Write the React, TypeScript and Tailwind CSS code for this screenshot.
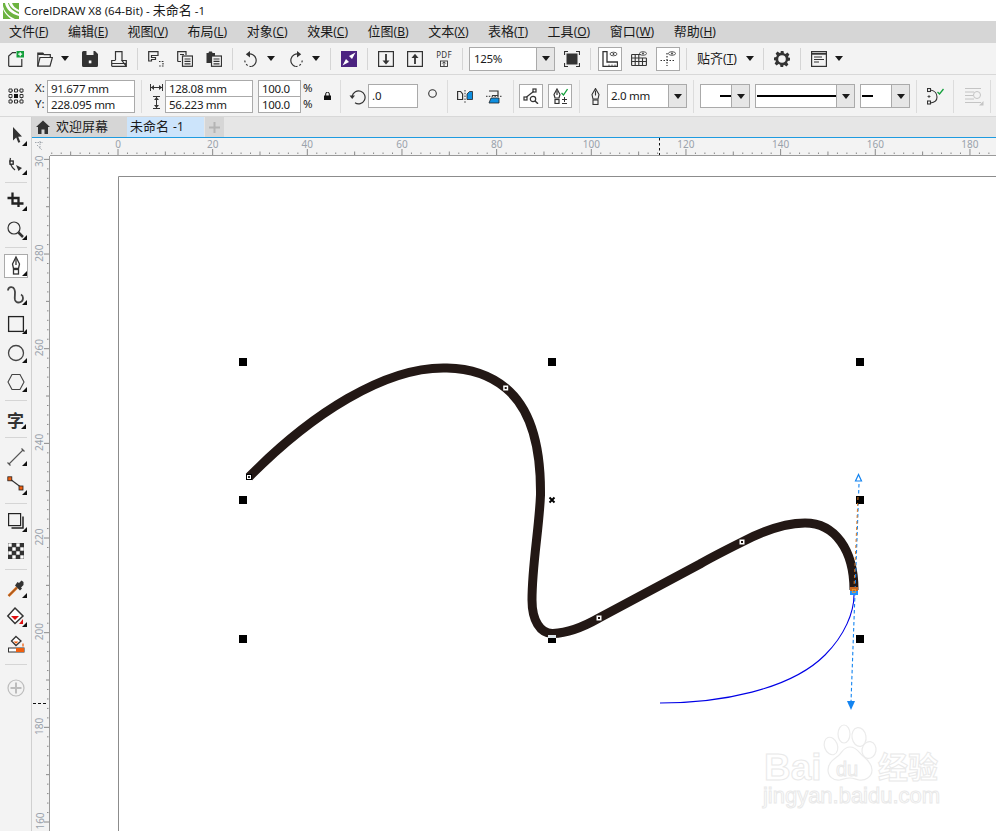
import React from "react";

const D = "#333333";

function Tri({ className = "" }: { className?: string }) {
  return (
    <svg viewBox="0 0 8 5" className={`w-[8px] h-[5px] ${className}`}>
      <polygon points="0,0 8,0 4,5" fill="#1a1a1a" />
    </svg>
  );
}

function Sep({ className = "" }: { className?: string }) {
  return <div className={`w-px h-[22px] bg-[#d5d5d5] ${className}`} />;
}
function Sep2({ className = "" }: { className?: string }) {
  return <div className={`w-px h-[33px] bg-[#dcdcdc] ${className}`} />;
}

function Ico({ children, className = "", vb = "0 0 16 16" }: { children: React.ReactNode; className?: string; vb?: string }) {
  return (
    <svg viewBox={vb} fill="none" stroke={D} strokeWidth="1.2" className={`block shrink-0 w-[16px] h-[16px] ${className}`}>
      {children}
    </svg>
  );
}

function MenuItem({ zh, k }: { zh: string; k: string }) {
  return (
    <span className="whitespace-nowrap text-[13px]">
      {zh}
      <span className="text-[12px]">
        (<span className="underline">{k}</span>)
      </span>
    </span>
  );
}

function Combo({ className = "", btn = "w-[18px]", children }: { className?: string; btn?: string; children?: React.ReactNode }) {
  return (
    <div className={`flex h-[24px] border border-[#aaaaaa] bg-white ${className}`}>
      <div className="flex-1 flex items-center min-w-0">{children}</div>
      <div className={`${btn} shrink-0 bg-[#e6e6e6] border-l border-[#aaaaaa] flex items-center justify-center`}>
        <Tri />
      </div>
    </div>
  );
}

function BoxBtn({ children, className = "" }: { children: React.ReactNode; className?: string }) {
  return <div className={`w-[24px] h-[24px] border border-[#aaaaaa] bg-white flex items-center justify-center ${className}`}>{children}</div>;
}

function Field({ v, className = "" }: { v: string; className?: string }) {
  return <div className={`h-[17px] border border-[#aaaaaa] bg-white pl-[3px] leading-[15px] text-[11.5px] tracking-[-0.3px] text-[#1a1a1a] whitespace-nowrap ${className}`}>{v}</div>;
}

function Tool({ children, flyout = true, active = false }: { children: React.ReactNode; flyout?: boolean; active?: boolean }) {
  return (
    <div className="h-[29px] flex items-center justify-center">
      <div className={`relative w-[24px] h-[24px] ${active ? "border border-[#aaaaaa] bg-white" : ""}`}>
        <svg viewBox="0 0 24 24" fill="none" stroke={D} strokeWidth="1.3" className={`block w-[24px] h-[24px] ${active ? "-m-px" : ""}`}>
          {children}
          {flyout && <polygon points="23,17 23,22 18,22" fill="#111" stroke="none" />}
        </svg>
      </div>
    </div>
  );
}

function ToolSep({ className }: { className: string }) {
  return (
    <div className={`${className} flex items-center justify-center`}>
      <div className="w-[22px] h-px bg-[#d5d5d5]" />
    </div>
  );
}

const TOP = [0, 20, 40, 60, 80, 100, 120, 140, 160, 180];
const LEFT = [300, 280, 260, 240, 220, 200, 180, 160];
const topX = (v: number) => 118 + v * 4.733;
const leftY = (v: number) => 822 - (v - 160) * 4.733;
const seq = (a: number, b: number) => Array.from({ length: b - a + 1 }, (_, i) => a + i);

function RulerTop() {
  return (
    <svg viewBox="50 138 946 17" className="block w-[946px] h-[17px]">
      {seq(-14, 190)
        .filter((u) => u % 2 === 0)
        .map((u) => {
          const x = topX(u);
          if (u % 20 === 0) return <line key={u} x1={x} x2={x} y1="149" y2="155" stroke="#8a8a8a" strokeWidth="1" />;
          if (u % 10 === 0) return <line key={u} x1={x} x2={x} y1="151.5" y2="155" stroke="#8a8a8a" strokeWidth="1" />;
          return <rect key={u} x={x - 0.5} y="152.5" width="1" height="1.5" fill="#8a8a8a" />;
        })}
      {TOP.map((v) => (
        <text key={v} x={topX(v)} y="148" textAnchor="middle" fontSize="10" fill="#9aa2ab" fontFamily="'Noto Sans',sans-serif">
          {v}
        </text>
      ))}
      <line x1="659.5" x2="659.5" y1="138" y2="155" stroke="#111" strokeWidth="1" strokeDasharray="2.5 2.5" />
    </svg>
  );
}

function RulerLeft() {
  return (
    <svg viewBox="32 156 17 675" className="block w-[17px] h-[675px]">
      {seq(150, 304)
        .filter((u) => u % 2 === 0)
        .map((u) => {
          const y = leftY(u);
          if (u % 20 === 0) return <line key={u} x1="44" x2="49" y1={y} y2={y} stroke="#8a8a8a" strokeWidth="1" />;
          if (u % 10 === 0) return <line key={u} x1="46" x2="49" y1={y} y2={y} stroke="#8a8a8a" strokeWidth="1" />;
          return <rect key={u} x="47" y={y - 0.5} width="1.5" height="1" fill="#8a8a8a" />;
        })}
      {LEFT.map((v) => (
        <text key={v} x="43.5" y={leftY(v) - 1} textAnchor="middle" fontSize="10" fill="#9aa2ab" fontFamily="'Noto Sans',sans-serif" transform={`rotate(-90 43.5 ${leftY(v) - 1})`}>
          {v}
        </text>
      ))}
      <line x1="33" x2="48" y1="703.5" y2="703.5" stroke="#111" strokeWidth="1" strokeDasharray="3 2" />
    </svg>
  );
}

function Node({ x, y }: { x: number; y: number }) {
  return (
    <g>
      <rect x={x - 2.5} y={y - 2.5} width="5" height="5" fill="#fff" />
      <rect x={x - 1} y={y - 1} width="2" height="2" fill="#231815" />
    </g>
  );
}

function Canvas() {
  const handles = [
    [243, 362],
    [552, 362],
    [860, 362],
    [243, 500],
    [860, 500],
    [243, 639],
    [552, 639],
    [860, 639],
  ];
  return (
    <svg viewBox="50 156 946 675" className="block w-[946px] h-[675px]">
      <path d="M118.5 831V176.5H996" fill="none" stroke="#8c8c8c" strokeWidth="1" />
      {/* watermark */}
      <g stroke="#ebebeb" strokeWidth="1.2" fill="#fff">
        <ellipse cx="831" cy="746" rx="6.5" ry="9" transform="rotate(-20 831 746)" />
        <ellipse cx="844" cy="734" rx="6" ry="9" />
        <ellipse cx="859" cy="737" rx="7" ry="9.5" transform="rotate(-10 859 737)" />
        <ellipse cx="869" cy="750" rx="7" ry="8.5" transform="rotate(10 869 750)" />
        <path d="M850 747c7 0 9 6 13 9 5 4 9 8 9 14 0 7-7 11-13 10-4-1-6-2-9-2s-6 1-10 2c-7 1-12-4-12-10 0-7 5-10 10-14 4-3 5-9 12-9z" />
      </g>
      <g fill="#fff" stroke="#e9e9e9" strokeWidth="1" fontFamily="'Liberation Sans',sans-serif" fontWeight="700">
        <text x="764" y="780" fontSize="37">Bai</text>
        <text x="836" y="776" fontSize="20" fontWeight="400">du</text>
        <text x="878" y="778" fontSize="30" fontFamily="'Noto Sans CJK SC',sans-serif">经验</text>
        <text x="763" y="803" fontSize="22" fontWeight="400" textLength="177">jingyan.baidu.com</text>
      </g>
      {/* blue preview */}
      <path d="M660 703C720 703 790 690 825 655C845 635 854 612 854 595" fill="none" stroke="#0000e6" strokeWidth="1.1" />
      {/* main curve */}
      <path
        d="M249 477C310 415 385 366 447 368C470 368.5 490 375 505.7 388C530 408 541 445 540.5 495C539 530 532 565 532 600C532 620 540 634 553 633.5C570 633 585 626 599 618L700 564C712 557 726 550 742 542C765 530 785 523 805 523C835 523 854 550 854 590"
        fill="none"
        stroke="#231815"
        strokeWidth="9"
      />
      <line x1="859" y1="484" x2="851" y2="702" stroke="#1484f0" strokeWidth="1.1" strokeDasharray="3.5 2.5" />
      <polygon points="858.5,474.5 855.5,481 861.5,481" fill="#fff" stroke="#1484f0" strokeWidth="1.2" />
      <polygon points="847,701 855,701 851,710" fill="#1484f0" />
      {handles.map(([x, y]) => (
        <rect key={`${x}-${y}`} x={x - 4} y={y - 4} width="8" height="8" fill="#000" />
      ))}
      <line x1="858" y1="497" x2="854" y2="588" stroke="#e07a20" strokeWidth="1" strokeDasharray="3 3" />
      <rect x="548" y="635" width="8" height="3" fill="#dde5ea" />
      <path d="M549.5 497.5l5 5M554.5 497.5l-5 5" stroke="#000" strokeWidth="1.9" />
      <Node x={505.7} y={388} />
      <Node x={599} y={618} />
      <Node x={742} y={542} />
      <rect x="246.5" y="474.5" width="5" height="5" fill="#fff" stroke="#000" strokeWidth="1" />
      <rect x="248" y="476" width="2" height="2" fill="#333" />
      <rect x="850" y="587" width="8" height="4" fill="#c8651e" />
      <rect x="850" y="591" width="8" height="4" fill="#1e90ff" />
      <rect x="852.5" y="589.5" width="3" height="3" fill="none" stroke="#e8a030" strokeWidth="0.8" />
    </svg>
  );
}

export default function App() {
  return (
    <div className="w-[996px] h-[831px] overflow-hidden flex flex-col bg-white text-[#1a1a1a] font-['Noto_Sans','Noto_Sans_CJK_SC',sans-serif]">
      {/* Title bar */}
      <div className="h-[21px] shrink-0 flex items-center pl-[3px] bg-white">
        <svg viewBox="0 0 16 16" className="block w-[16px] h-[16px] shrink-0">
          <rect width="16" height="16" fill="#6cb33f" />
          <path d="M0 0h5c1 4 4 8 11 11v2C8 11 3 6 2 0z" fill="#fff" />
          <path d="M6 0h3c1 3 3 5 7 7v2C11 7 7 4 6 0z" fill="#fff" />
          <path d="M0 3c1 5 5 10 12 13H8C4 13 1 9 0 6z" fill="#fff" />
        </svg>
        <span className="ml-[5px] text-[11.5px] whitespace-nowrap">
          CorelDRAW X8 (64-Bit) - <span className="text-[13px]">未命名</span> -1
        </span>
      </div>

      {/* Menu bar */}
      <div className="h-[22px] shrink-0 bg-[#d6d6d6] flex items-center gap-[19.6px] pl-[9px]">
        {[
          ["文件", "F"],
          ["编辑", "E"],
          ["视图", "V"],
          ["布局", "L"],
          ["对象", "C"],
          ["效果", "C"],
          ["位图", "B"],
          ["文本", "X"],
          ["表格", "T"],
          ["工具", "O"],
          ["窗口", "W"],
          ["帮助", "H"],
        ].map(([z, k], i) => (
          <MenuItem key={i} zh={z} k={k} />
        ))}
      </div>

      {/* Standard toolbar */}
      <div className="h-[32px] shrink-0 bg-[#f3f3f3] border-b border-[#d8d8d8] flex items-center pl-[8px]">
        <Ico>
          <path d="M.7 15.3V5L4.5 1.6H8M13.8 8v7.3H.7" />
          <rect x="8.5" y="0" width="7.5" height="6.5" fill="#14a03c" stroke="none" />
          <path d="M12.2 1.2v4M10.2 3.2h4" stroke="#fff" strokeWidth="1.2" />
        </Ico>
        <Ico className="ml-[13px]">
          <path d="M.8 15.2V2h5l1.2 1.6h6.3V6.5" />
          <path d="M.8 15.2L3 6.5H15.4L13 15.2z" />
          <path d="M1 2h5l1 2H1z" fill={D} stroke="none" />
        </Ico>
        <Tri className="ml-[8px]" />
        <Ico className="ml-[13px]">
          <path d="M0 1.5A1.5 1.5 0 0 1 1.5 0H13l3 3v11.5a1.5 1.5 0 0 1-1.5 1.5h-13A1.5 1.5 0 0 1 0 14.5z" fill={D} stroke="none" />
          <rect x="4.5" y="0" width="7" height="4" fill="#f3f3f3" stroke="none" />
          <rect x="6.8" y="9.5" width="2.6" height="2.8" fill="#fff" stroke="none" />
        </Ico>
        <Ico className="ml-[13px]">
          <path d="M4.5 9V.7h6.5V9M.7 15.3V9.5H4.5M11 9.5h4.3v5.8zM.7 15.3H15.3M.7 12.5H15" />
        </Ico>
        <Sep className="ml-[10px] mr-[10px]" />
        <Ico>
          <path d="M.7 10V.7H10V4.5H3.5V6.5H7.5V8.5H3.5V10z" />
          <path d="M11 10.5h4v4.5h-4.5" strokeDasharray="1.5 1.2" />
        </Ico>
        <Ico className="ml-[13px]">
          <path d="M.7 10.5V.7H9V4M.7 10.5H4M3 3.5h4" />
          <rect x="5.5" y="5" width="10" height="10.3" />
          <path d="M7.5 8h6M7.5 10.3h6M7.5 12.8h6" />
        </Ico>
        <Ico className="ml-[13px]">
          <path d="M.5 2h2l.5-1.5h3L6.5 2H9V12H.5z" fill={D} stroke="none" />
          <rect x="5.5" y="5" width="10" height="10.3" fill="#f3f3f3" />
          <path d="M7.5 8h6M7.5 10.3h6M7.5 12.8h6" />
        </Ico>
        <Sep className="ml-[10px] mr-[10px]" />
        <Ico>
          <path d="M5 3.2A6.3 6.3 0 1 1 8.5 15.5" />
          <path d="M8.5 15.5A6.3 6.3 0 0 1 1.8 9" strokeDasharray="2 2" />
          <polygon points="7,0 7,6.5 2.8,3.2" fill={D} stroke="none" />
        </Ico>
        <Tri className="ml-[8px]" />
        <Ico className="ml-[13px]">
          <path d="M11 3.2A6.3 6.3 0 1 0 7.5 15.5" />
          <path d="M7.5 15.5A6.3 6.3 0 0 0 14.2 9" strokeDasharray="2 2" />
          <polygon points="9,0 9,6.5 13.2,3.2" fill={D} stroke="none" />
        </Ico>
        <Tri className="ml-[8px]" />
        <Sep className="ml-[10px] mr-[10px]" />
        <Ico>
          <rect width="16" height="16" fill="#4b2380" stroke="none" />
          <polygon points="1.5,14.5 5,8 8,11" fill="#fff" stroke="none" />
          <polygon points="14.5,1.5 8,5 11,8" fill="#fff" stroke="none" />
        </Ico>
        <Sep className="ml-[10px] mr-[10px]" />
        <Ico>
          <rect x=".6" y=".6" width="14.8" height="14.8" />
          <path d="M8 3v8" strokeWidth="1.8" />
          <polygon points="4.5,9.5 11.5,9.5 8,13.5" fill={D} stroke="none" />
        </Ico>
        <Ico className="ml-[13px]">
          <rect x=".6" y=".6" width="14.8" height="14.8" />
          <path d="M8 6v7" strokeWidth="1.8" />
          <polygon points="4.5,7 11.5,7 8,2.8" fill={D} stroke="none" />
        </Ico>
        <div className="ml-[13px] w-[16px] h-[16px] flex flex-col items-center">
          <span className="text-[8px] leading-[8px] tracking-[0.3px] text-[#333]">PDF</span>
          <svg viewBox="0 0 8 7" className="block w-[8px] h-[7px] mt-[1px]" fill="none" stroke={D} strokeWidth=".9">
            <rect x=".5" y="1" width="7" height="5.5" />
            <path d="M4 6V2M2.3 3.5L4 1.8l1.7 1.7" />
          </svg>
        </div>
        <Sep className="ml-[10px] mr-[6px]" />
        <Combo className="w-[86px]">
          <span className="pl-[4px] text-[11.5px] tracking-[-0.3px]">125%</span>
        </Combo>
        <Ico className="ml-[9px]">
          <rect x="2.5" y="2.5" width="11" height="11" fill={D} stroke="none" />
          <path d="M.5 4V.5H4M12 .5h3.5V4M15.5 12v3.5H12M4 15.5H.5V12" />
        </Ico>
        <Sep className="ml-[10px] mr-[7px]" />
        <BoxBtn>
          <Ico>
            <path d="M1 .5v14.8h14.5V11H5V.5z" strokeWidth="1.3" />
            <path d="M7 13.5v2M10 13.5v2M13 13.5v2" strokeWidth=".8" />
            <ellipse cx="11.5" cy="3" rx="3.5" ry="1.8" strokeWidth=".8" />
            <circle cx="11.5" cy="3" r=".9" fill={D} stroke="none" />
          </Ico>
        </BoxBtn>
        <Ico className="ml-[9px]">
          <path d="M.6 3.5h9M.6 7h14.8M.6 10.5h14.8M.6 14.5h14.8M.6 3.5v11M4.2 3.5v11M7.8 3.5v11M11.5 7v7.5M15.4 7v7.5" strokeWidth="1.1" />
          <ellipse cx="12" cy="2.5" rx="3.5" ry="1.8" strokeWidth=".8" />
          <circle cx="12" cy="2.5" r=".9" fill={D} stroke="none" />
        </Ico>
        <BoxBtn className="ml-[9px]">
          <Ico>
            <path d="M7 2v13M.5 9.5h14" strokeDasharray="1.5 1.5" />
            <ellipse cx="12" cy="2.5" rx="3.5" ry="1.8" strokeWidth=".8" />
            <circle cx="12" cy="2.5" r=".9" fill={D} stroke="none" />
          </Ico>
        </BoxBtn>
        <Sep className="ml-[6px] mr-[10px]" />
        <span className="text-[13px] whitespace-nowrap">
          贴齐<span className="text-[12px]">(<span className="underline">T</span>)</span>
        </span>
        <Tri className="ml-[9px]" />
        <Sep className="ml-[9px] mr-[10px]" />
        <Ico>
          <path d="M6.5 0h3l.4 2.2 1.6.7L13.4 1.6l2 2-1.3 1.9.7 1.6L16 6.5v3l-2.2.4-.7 1.6 1.3 1.9-2 2-1.9-1.3-1.6.7L9.5 16h-3l-.4-2.2-1.6-.7-1.9 1.3-2-2 1.3-1.9-.7-1.6L0 9.5v-3l2.2-.4.7-1.6L1.6 2.600l2-2 1.900 1.300 1.600-.7z" fill={D} stroke="none" />
          <circle cx="8" cy="8" r="3.8" fill="#f3f3f3" stroke="none" />
        </Ico>
        <Sep className="ml-[10px] mr-[10px]" />
        <Ico>
          <rect x=".6" y=".6" width="14.8" height="14.8" />
          <path d="M.6 2.8h14.8" strokeWidth="1.8" />
          <path d="M3 6h8M3 8.5h10M3 11h5" strokeWidth="1" />
        </Ico>
        <Tri className="ml-[8px]" />
      </div>

      {/* Property bar */}
      <div className="h-[42px] shrink-0 bg-[#f3f3f3] border-b border-[#d8d8d8] flex items-center pl-[8px] pt-[1px]">
        <Ico>
          <path d="M4 2.5h2.5M9.5 2.5H12M4 13.5h2.5M9.5 13.5H12M2.5 4v2.5M2.5 9.5V12M13.5 4v2.5M13.5 9.5V12" strokeWidth=".8" strokeDasharray="1 1" />
          <path d="M1 1h3v3H1zM6.5 1h3v3h-3zM12 1h3v3h-3zM1 6.5h3v3H1zM12 6.5h3v3h-3zM1 12h3v3H1zM6.5 12h3v3h-3zM12 12h3v3h-3z" strokeWidth="1" />
          <rect x="6" y="6" width="4" height="4" fill="#111" stroke="none" />
        </Ico>
        <div className="ml-[11px] w-[12px] flex flex-col text-[11.5px] leading-[16px]">
          <span>X:</span>
          <span>Y:</span>
        </div>
        <div className="w-[88px] flex flex-col">
          <Field v="91.677 mm" />
          <Field v="228.095 mm" className="-mt-px" />
        </div>
        <Sep2 className="ml-[6px]" />
        <div className="ml-[8px] w-[13px] flex flex-col items-center gap-[5px]">
          <svg viewBox="0 0 13 7" className="block w-[13px] h-[7px]" fill={D}>
            <path d="M0 0h1v7H0zM12 0h1v7h-1zM1 3h11v1H1z" />
            <polygon points="1,3.5 4,1 4,6" />
            <polygon points="12,3.5 9,1 9,6" />
            <path d="M5.5 3h1v1h-1zM7.5 3h1v1h-1z" />
          </svg>
          <svg viewBox="0 0 7 13" className="block w-[7px] h-[13px]" fill={D}>
            <path d="M0 0h7v1H0zM0 12h7v1H0zM3 1h1v11H3z" />
            <polygon points="3.5,1 1,4 6,4" />
            <polygon points="3.5,12 1,9 6,9" />
          </svg>
        </div>
        <div className="ml-[2px] w-[88px] flex flex-col">
          <Field v="128.08 mm" />
          <Field v="56.223 mm" className="-mt-px" />
        </div>
        <div className="ml-[5px] w-[43px] flex flex-col">
          <Field v="100.0" />
          <Field v="100.0" className="-mt-px" />
        </div>
        <div className="ml-[2px] w-[10px] flex flex-col text-[11.5px] leading-[16px]">
          <span>%</span>
          <span>%</span>
        </div>
        <svg viewBox="0 0 7 8" className="block ml-[11px] w-[7px] h-[8px]" fill="#111">
          <path d="M0 3.5h7V8H0z" />
          <path d="M1.7 4V2a1.8 1.8 0 0 1 3.6 0v2" fill="none" stroke="#111" strokeWidth="1" />
        </svg>
        <Sep2 className="ml-[9px]" />
        <svg viewBox="0 0 17 17" className="block ml-[8px] w-[17px] h-[17px]" fill="none" stroke={D} strokeWidth="1.2">
          <path d="M3.2 8A6.5 6.5 0 1 1 6 14.8" />
          <polygon points=".5,7.5 6,7.5 3.2,11" fill={D} stroke="none" />
        </svg>
        <div className="ml-[2px] w-[50px] h-[24px] border border-[#aaaaaa] bg-white pl-[3px] text-[11.5px] leading-[22px]">.0</div>
        <svg viewBox="0 0 9 9" className="block ml-[10px] mb-[6px] w-[9px] h-[9px]" fill="none" stroke={D} strokeWidth="1.1">
          <circle cx="4.5" cy="4.5" r="3.8" />
        </svg>
        <Sep2 className="ml-[10px]" />
        <Ico className="ml-[9px]">
          <path d="M.6 3.5h3l2 2.5v5.5h-5z" />
          <path d="M8 2v13" strokeDasharray="1.5 1.3" stroke="#555" />
          <path d="M10 11.5h5.5V3.5h-3L10 6z" fill="#0f8fe0" stroke="#222" strokeWidth=".8" />
        </Ico>
        <Ico className="ml-[13px]">
          <path d="M3 3h9v4.5H6" />
          <path d="M0 8.3h16" strokeDasharray="1.5 1.3" stroke="#555" />
          <path d="M5 10h8v5H3z" fill="#0f8fe0" stroke="#222" strokeWidth=".8" />
        </Ico>
        <Sep2 className="ml-[11px]" />
        <BoxBtn className="ml-[5px]">
          <Ico>
            <rect x="1" y="9" width="3" height="3" />
            <rect x="10" y="1" width="3" height="3" />
            <path d="M3.5 9L10.5 3.5" />
            <circle cx="10" cy="11" r="2.7" />
            <path d="M12 13l3 2.7" strokeWidth="1.5" />
          </Ico>
        </BoxBtn>
        <BoxBtn className="ml-[5px]">
          <Ico>
            <path d="M5 1L8 6.5 7 10H3L2 6.5z" />
            <path d="M5 3v4" />
            <rect x="3" y="11.5" width="4" height="4" />
            <path d="M9.5 5l2 2L15.5 1" stroke="#14a03c" strokeWidth="1.3" />
            <path d="M10 11.5h5M12.5 9v5M10 15.5h5" strokeWidth="1" />
          </Ico>
        </BoxBtn>
        <Sep2 className="ml-[7px]" />
        <svg viewBox="0 0 9 17" className="block ml-[11px] w-[9px] h-[17px]" fill="none" stroke={D} strokeWidth="1.1">
          <path d="M4.5 .5L8 6.5 7 11H2L1 6.5z" />
          <path d="M4.5 2.5v5" />
          <rect x="2" y="12" width="5" height="4.5" />
        </svg>
        <Combo className="ml-[7px] w-[80px]">
          <span className="pl-[3px] text-[11.5px] tracking-[-0.3px]">2.0 mm</span>
        </Combo>
        <Sep2 className="ml-[6px]" />
        <Combo className="ml-[6px] w-[50px]" btn="w-[18px]">
          <div className="ml-auto w-[11px] h-[2px] bg-black" />
        </Combo>
        <Combo className="ml-[5px] w-[100px]">
          <div className="ml-px w-full h-[1.5px] bg-black" />
        </Combo>
        <Combo className="ml-[5px] w-[50px]">
          <div className="w-[11px] ml-px h-[2px] bg-black" />
        </Combo>
        <Sep2 className="ml-[6px]" />
        <svg viewBox="0 0 17 17" className="block ml-[10px] w-[17px] h-[17px]" fill="none" stroke={D} strokeWidth="1.1">
          <rect x=".5" y=".5" width="3" height="3" />
          <rect x=".5" y="13" width="3" height="3" />
          <path d="M3.5 2C8 2.5 10 6 10 9s-2 5.5-6.5 6" />
          <path d="M2 7v3M.5 8.5h3" strokeWidth=".8" />
          <path d="M10.5 4l2 2L16.5 1" stroke="#14a03c" strokeWidth="1.3" />
        </svg>
        <Sep2 className="ml-[9px]" />
        <svg viewBox="0 0 20 20" className="block ml-[10px] w-[20px] h-[20px]" fill="none" stroke="#c4c4c4" strokeWidth="1">
          <path d="M1 2.5h16M1 6h9M1 9.5h8M1 13h9M1 16.5h16" />
          <circle cx="13" cy="9" r="3.5" />
          <polygon points="19.5,15 19.5,19.5 15,19.5" fill="#c4c4c4" stroke="none" />
        </svg>
        <Sep2 className="ml-[6px]" />
      </div>

      {/* Body */}
      <div className="flex-1 min-h-0 flex">
        {/* Toolbox */}
        <div className="w-[32px] shrink-0 bg-[#f3f3f3] border-r border-[#d0d0d0] pt-[4px] flex flex-col">
          <Tool>
            <path d="M9 3L18 12.5 14.2 12.8 16.3 18 14.3 18.8 12.2 13.6 9 16.5z" fill={D} stroke="none" />
          </Tool>
          <Tool>
            <path d="M6.5 5C5 9 7 14 11 17" />
            <rect x="6" y="8" width="3.2" height="3.2" fill="#fff" stroke="#222" />
            <polygon points="12,12 18,15 14.5,18" fill={D} stroke="none" />
          </Tool>
          <ToolSep className="h-[7px]" />
          <Tool>
            <path d="M3.5 9H14.5V18M8.5 3.5V14.5H19.5" stroke="#222" strokeWidth="2.3" />
          </Tool>
          <Tool>
            <circle cx="10" cy="10" r="6" strokeWidth="1.2" />
            <path d="M14.5 14.5L19 19" strokeWidth="2.5" />
          </Tool>
          <ToolSep className="h-[7px]" />
          <Tool active>
            <path d="M12 3L15.5 10 14.5 14.5H9.5L8.5 10z" />
            <path d="M12 5v6" />
            <rect x="9.5" y="15.5" width="5" height="4.5" />
          </Tool>
          <Tool>
            <path d="M4 7.5C4 4 9 2.5 10.5 6.5 12 10 10 14 11 17 12.5 21 19 20 19 15 19 13 18 12 17 11.5" strokeWidth="1.8" stroke="#444" />
          </Tool>
          <Tool>
            <rect x="4.6" y="4.6" width="14.8" height="14.8" strokeWidth="1.3" stroke="#222" />
          </Tool>
          <Tool>
            <circle cx="12" cy="12" r="7.5" strokeWidth="1.3" stroke="#444" />
          </Tool>
          <Tool>
            <path d="M8 4.5H16L20 12 16 19.5H8L4 12z" strokeWidth="1.1" stroke="#444" />
          </Tool>
          <ToolSep className="h-[9px]" />
          <div className="relative h-[29px] flex items-center justify-center">
            <span className="text-[17px] font-bold leading-none text-[#333] font-['Noto_Sans_CJK_SC',sans-serif]">字</span>
            <span className="absolute right-[5px] bottom-[5px] w-0 h-0 border-l-[5px] border-l-transparent border-b-[5px] border-b-[#111]" />
          </div>
          <ToolSep className="h-[7px]" />
          <Tool>
            <path d="M5 20L19 6" stroke="#555" strokeWidth="1.1" />
            <path d="M3.5 18.5L6.5 21.5M17.5 4.5L20.5 7.5" stroke="#555" />
          </Tool>
          <Tool>
            <path d="M6 6L18 15" stroke="#333" strokeWidth="1.2" />
            <rect x="3.8" y="3.8" width="4" height="4" fill="#f06010" stroke="#222" strokeWidth=".8" />
            <rect x="15" y="13" width="4" height="4" fill="#f06010" stroke="#222" strokeWidth=".8" />
          </Tool>
          <ToolSep className="h-[8px]" />
          <Tool>
            <rect x="4.6" y="3.6" width="12" height="12" stroke="#222" strokeWidth="1.2" />
            <path d="M19 6.5V18H7.5" stroke="#222" strokeWidth="1.5" />
          </Tool>
          <div className="h-[29px] flex items-center justify-center">
            <svg viewBox="0 0 16 16" className="block w-[16px] h-[16px]">
              <rect width="16" height="16" fill="#333" />
              {[0, 1, 2, 3].flatMap((r) =>
                [0, 1, 2, 3]
                  .filter((c) => (r + c) % 2 === 0)
                  .map((c) => <rect key={`${r}${c}`} x={c * 4 + 0.3} y={r * 4 + 0.3} width="3.4" height="3.4" fill="#fff" />),
              )}
            </svg>
          </div>
          <ToolSep className="h-[8px]" />
          <Tool>
            <path d="M4.5 20L13 11.5" stroke="#e0701a" strokeWidth="2.5" />
            <path d="M4.5 20L13 11.5" stroke="#333" strokeWidth=".6" />
            <path d="M11 9.5L16 14.5 18 12.5 17 11.5 19.5 9 19.5 6 17.5 4.5 15 7 13.5 6z" fill="#333" stroke="none" />
          </Tool>
          <Tool>
            <path d="M11 3L19 11 11 18.5 3.8 11z" stroke="#333" strokeWidth="1.5" fill="#fff" />
            <polygon points="7,11 15,11 11,15" fill="#e01010" stroke="none" />
            <polygon points="19,14 19,19 15,19" fill="#e01010" stroke="none" />
          </Tool>
          <Tool flyout={false}>
            <path d="M12 2.5L17 7 12 11.5 7.5 7z" stroke="#333" strokeWidth="1.3" fill="#fff" />
            <polygon points="9.5,7.5 14.5,7.5 12,9.8" fill="#f06010" stroke="none" />
            <rect x="4.5" y="14" width="15.5" height="4" fill="#fff" stroke="#333" strokeWidth="1" />
            <rect x="12" y="14" width="8" height="4" fill="#f06010" stroke="none" />
            <path d="M19 9.5v3" stroke="#f06010" />
          </Tool>
          <ToolSep className="h-[8px] mb-[11px]" />
          <div className="flex items-center justify-center">
            <svg viewBox="0 0 18 18" className="block w-[18px] h-[18px]" fill="none" stroke="#bdbdbd">
              <circle cx="9" cy="9" r="8" strokeWidth="1.2" />
              <path d="M9 3.5v11M3.5 9h11" strokeWidth="2" />
            </svg>
          </div>
        </div>

        {/* Right */}
        <div className="flex-1 min-w-0 flex flex-col">
          {/* Tabs */}
          <div className="h-[21px] shrink-0 bg-[#e6e6e6] border-b border-[#1e9be0] flex">
            <div className="w-[95px] bg-[#d6d6d6] flex items-center pl-[4px]">
              <svg viewBox="0 0 14 14" className="block w-[14px] h-[14px]" fill="#333">
                <path d="M7 .5L14 7h-2v7H8.5V9.5h-3V14H2V7H0z" />
              </svg>
              <span className="ml-[6px] text-[13px]">欢迎屏幕</span>
            </div>
            <div className="w-[77px] bg-[#cce4fb] flex items-center pl-[3px] text-[13px]">
              未命名 <span className="text-[12px] ml-[4px]">-1</span>
            </div>
            <div className="ml-px w-[19px] bg-[#d6d6d6] flex items-center justify-center">
              <svg viewBox="0 0 11 11" className="block w-[11px] h-[11px]" fill="#b4b4b4">
                <path d="M4.5 0h2v4.5H11v2H6.5V11h-2V6.5H0v-2h4.5z" />
              </svg>
            </div>
          </div>
          {/* Top ruler */}
          <div className="h-[18px] shrink-0 bg-[#f3f3f3] flex">
            <div className="w-[18px] shrink-0 flex items-center justify-center pr-[3px] pb-[2px]">
              <svg viewBox="0 0 10 10" className="block w-[10px] h-[10px]" fill="none" stroke="#a0a6ad" strokeWidth="1">
                <path d="M0 1.5h8M5 0v8M2 4l5 5" strokeDasharray="1.5 1" />
              </svg>
            </div>
            <div className="border-b border-[#9a9a9a] w-[946px]">
              <RulerTop />
            </div>
          </div>
          <div className="flex-1 min-h-0 flex">
            <div className="w-[18px] shrink-0 bg-[#f3f3f3] border-r border-[#9a9a9a] overflow-hidden">
              <RulerLeft />
            </div>
            <div className="flex-1 bg-white overflow-hidden">
              <Canvas />
            </div>
          </div>
        </div>
      </div>
    </div>
  );
}
